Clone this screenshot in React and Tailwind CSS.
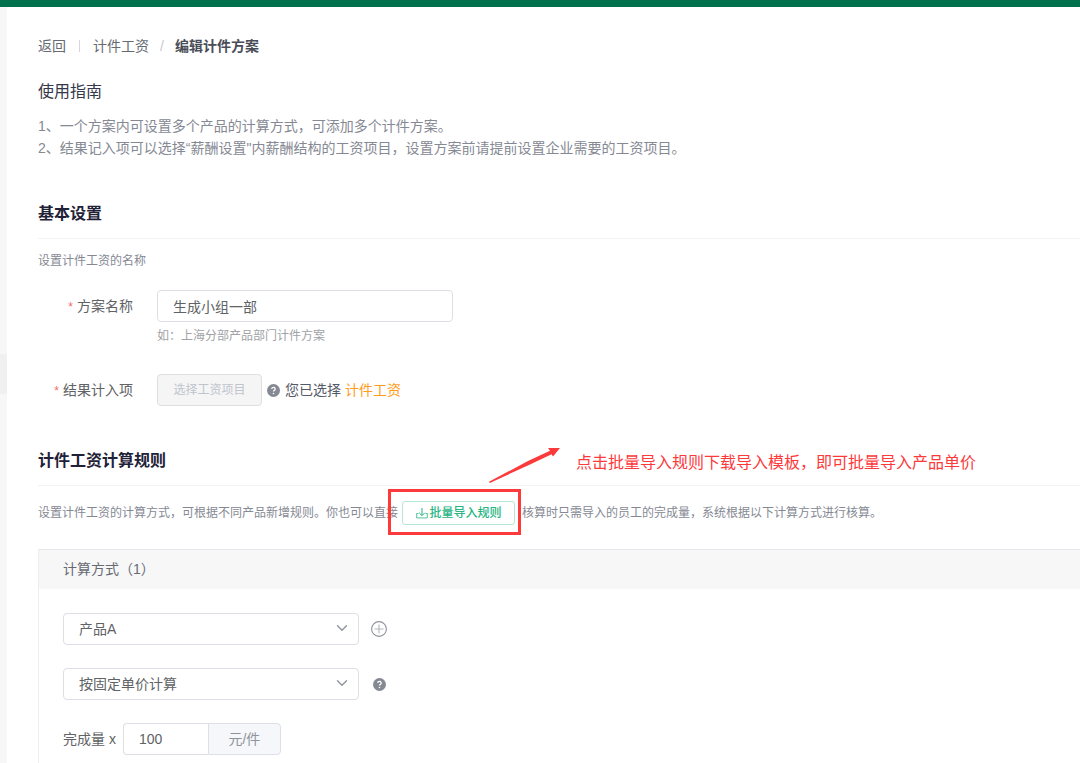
import { useState } from 'react';
import { ChevronDown } from 'lucide-react';

function QuestionIcon() {
  return (
    <svg className="w-[13px] h-[13px] shrink-0" viewBox="0 0 13 13" aria-hidden="true">
      <circle cx="6.5" cy="6.5" r="6.5" fill="#858993" />
      <path
        d="M4.8 5.1a1.7 1.6 0 1 1 2.6 1.3c-.6.4-.9.6-.9 1.2"
        fill="none"
        stroke="#fff"
        strokeWidth="1.3"
      />
      <circle cx="6.5" cy="9.5" r="0.8" fill="#fff" />
    </svg>
  );
}

function PlusCircleIcon() {
  return (
    <svg className="w-4 h-4" viewBox="0 0 16 16" fill="none" aria-hidden="true">
      <circle cx="8" cy="8" r="7.4" stroke="#8f929b" strokeWidth="1.1" />
      <path d="M8 3.5v9M3.5 8h9" stroke="#b4b6bc" strokeWidth="1.1" />
    </svg>
  );
}

function ImportIcon() {
  return (
    <svg className="w-3 h-3" viewBox="0 0 12 12" fill="none" stroke="#27b583" aria-hidden="true">
      <path d="M6 1v7.5M3.2 5.8 6 8.6l2.8-2.8" />
      <path d="M2.5 6.5H.7v4.4h10.6V6.5H9.5" strokeOpacity="0.8" />
    </svg>
  );
}

function SectionTitle({ children }) {
  return (
    <h2 className="mt-[43px] pb-3 border-b border-[#f3f3f6] text-base leading-6 font-bold text-[#1f2237]">
      {children}
    </h2>
  );
}

function FieldLabel({ htmlFor, children }) {
  return (
    <label htmlFor={htmlFor} className="w-[95px] shrink-0 text-right text-sm leading-8 text-[#606266]">
      <span className="text-xs text-[#f56c6c] mr-1">*</span>
      {children}
    </label>
  );
}

function SelectBox({ label, options }) {
  return (
    <div className="relative w-[296px]">
      <select
        aria-label={label}
        className="w-full h-8 pl-[15px] pr-8 appearance-none rounded border border-[#dcdfe6] bg-white text-sm text-[#606266]"
      >
        {options.map((o) => (
          <option key={o}>{o}</option>
        ))}
      </select>
      <ChevronDown
        className="absolute right-2 top-1.5 w-[18px] h-[18px] text-[#8f939c] pointer-events-none"
        strokeWidth={1.8}
      />
    </div>
  );
}

export default function App() {
  const [name, setName] = useState('生成小组一部');
  const [price, setPrice] = useState('100');

  return (
    <div className="min-h-screen flex flex-col bg-white overflow-hidden font-['Liberation_Sans','Noto_Sans_CJK_SC',sans-serif]">
      <header className="h-[7px] bg-[#00704d]" />
      <div className="flex flex-1">
        <aside className="w-[7px] shrink-0 bg-[#f7f7f7] pt-[347px]">
          <div className="h-10 bg-[#f0f0f0]" />
        </aside>

        <main className="flex-1 min-w-0 flex flex-col pl-[31px] pt-[27px]">
          <nav className="flex items-center text-sm leading-6 text-[#666a72]">
            <a href="#back">返回</a>
            <span className="w-px h-3 mx-[13px] bg-[#d5d7dc]" />
            <a href="#piecework">计件工资</a>
            <span className="mx-[11px] text-[#c8cad0]">/</span>
            <span className="font-bold text-[#4a4d57]">编辑计件方案</span>
          </nav>

          <h1 className="mt-[22px] text-base leading-6 text-[#34384a]">使用指南</h1>
          <div className="mt-[11px] text-sm leading-[22px] text-[#858993]">
            <p>1、一个方案内可设置多个产品的计算方式，可添加多个计件方案。</p>
            <p>2、结果记入项可以选择“薪酬设置"内薪酬结构的工资项目，设置方案前请提前设置企业需要的工资项目。</p>
          </div>

          <SectionTitle>基本设置</SectionTitle>
          <p className="mt-3 text-xs leading-5 text-[#858993]">设置计件工资的名称</p>

          <div className="mt-[19px] flex gap-6">
            <FieldLabel htmlFor="plan-name">方案名称</FieldLabel>
            <div>
              <input
                id="plan-name"
                value={name}
                onChange={(e) => setName(e.target.value)}
                className="block w-[296px] h-8 px-[15px] rounded border border-[#dcdfe6] text-sm text-[#606266]"
              />
              <p className="mt-[5px] text-xs leading-[18px] text-[#a0a2a6]">如：上海分部产品部门计件方案</p>
            </div>
          </div>

          <div className="mt-[29px] flex gap-6">
            <FieldLabel htmlFor="wage-item">结果计入项</FieldLabel>
            <div className="flex items-center text-sm text-[#555a68]">
              <button
                id="wage-item"
                disabled
                className="w-[105px] h-8 mr-[5px] rounded border border-[#dfdfdf] bg-[#f5f5f5] text-xs text-[#c0c4cc]"
              >
                选择工资项目
              </button>
              <QuestionIcon />
              <span className="ml-[5px]">您已选择</span>
              <span className="ml-1 text-[#ff9c1a]">计件工资</span>
            </div>
          </div>

          <SectionTitle>计件工资计算规则</SectionTitle>
          <div className="mt-[15px] flex items-center h-6 text-xs text-[#858993] whitespace-nowrap">
            <span>设置计件工资的计算方式，可根据不同产品新增规则。你也可以直接</span>
            <div className="relative ml-1 mr-[7px]">
              <button className="flex items-center justify-center gap-0.5 w-[113px] h-6 rounded-[3px] border border-[#b5e6d4] font-medium text-[#27b583]">
                <ImportIcon />
                批量导入规则
              </button>

              {/* Callout drawn over the import button */}
              <div className="absolute -left-3.5 -top-3 w-[133px] h-[46px] border-3 border-[#fc3a3c] pointer-events-none" />
              <svg
                className="absolute left-[86px] -top-[54px] w-[73px] h-9 pointer-events-none"
                viewBox="0 0 73 36"
                fill="#fc3a3c"
                aria-hidden="true"
              >
                <path d="M1 34.8 40 14 62 3.8 60 1 72 1 65 9.6 63.6 7.2 42 17.5 1.8 36Z" />
              </svg>
              <p className="absolute left-[174px] -top-[50px] text-base leading-6 text-[#fc3a3c]">
                点击批量导入规则下载导入模板，即可批量导入产品单价
              </p>
            </div>
            <span>核算时只需导入的员工的完成量，系统根据以下计算方式进行核算。</span>
          </div>

          <section className="mt-6 flex-1 border-t border-l border-t-[#e4e6eb] border-l-[#ebeef5]">
            <h3 className="h-[39px] pl-6 bg-[#f7f7f8] text-sm leading-[39px] text-[#666a72]">计算方式（1）</h3>
            <div className="flex flex-col gap-[23px] pl-6 pt-6">
              <div className="flex items-center gap-3">
                <SelectBox label="产品" options={['产品A']} />
                <button aria-label="添加产品">
                  <PlusCircleIcon />
                </button>
              </div>
              <div className="flex items-center gap-3.5">
                <SelectBox label="计算方式" options={['按固定单价计算']} />
                <QuestionIcon />
              </div>
              <div className="flex items-center text-sm text-[#606266]">
                <label htmlFor="unit-price">完成量 x</label>
                <input
                  id="unit-price"
                  value={price}
                  onChange={(e) => setPrice(e.target.value)}
                  className="w-[85px] h-8 ml-[7px] px-[15px] rounded-l border border-r-0 border-[#dcdfe6]"
                />
                <span className="w-[73px] h-8 leading-[30px] text-center rounded-r border border-[#dcdfe6] bg-[#f5f7fa] text-[#909399]">
                  元/件
                </span>
              </div>
            </div>
          </section>
        </main>
      </div>
    </div>
  );
}
